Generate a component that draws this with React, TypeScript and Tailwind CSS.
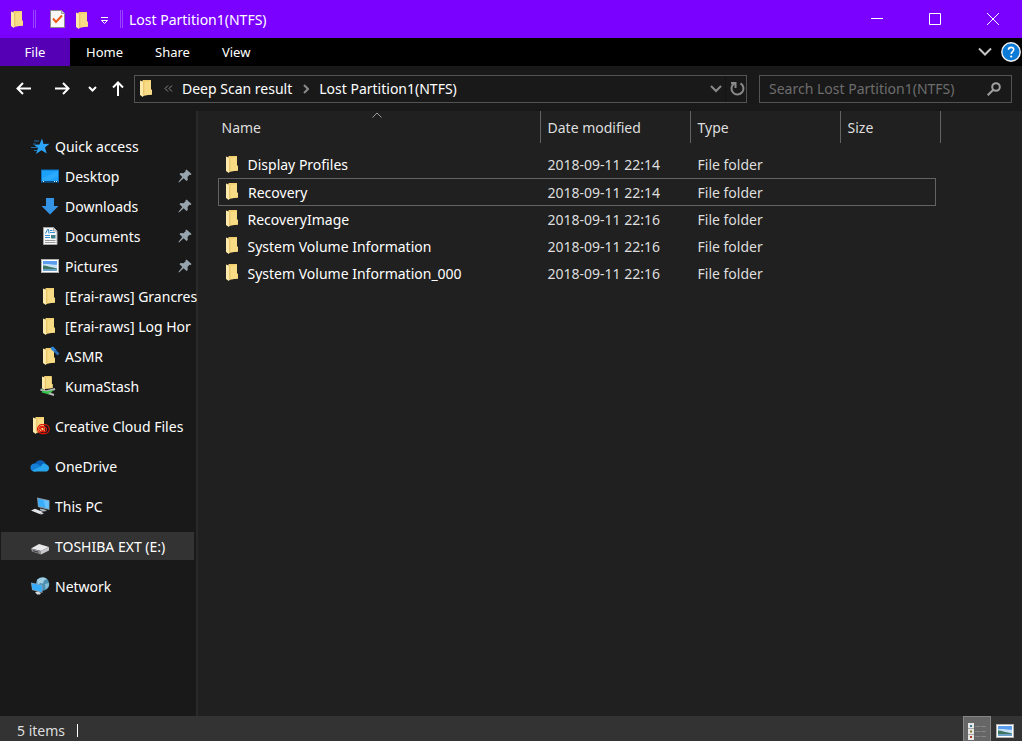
import React from "react";

type IconProps = { className?: string };

function FolderShape() {
  return (
    <>
      <path d="M2.500 0H11v9.500l1 .5v4.500L4 15.500 2.500 14z" fill="#f2cf6e" />
      <path d="M4 2.500 11 1v8.500l1 .5v4.500L4 15.500z" fill="#f8dc85" />
      <path d="M0 .5 4 2v13.200L2.800 17 0 15z" fill="#fde9a9" />
      <path d="M3.300 2 4.200 2.300V15l-.9 1z" fill="#e0b654" />
    </>
  );
}

function Folder({ className = "" }: IconProps) {
  return (
    <svg className={className} width="12" height="17" viewBox="0 0 12 17" aria-hidden="true">
      <FolderShape />
    </svg>
  );
}

function FolderLink() {
  return (
    <svg width="20" height="20" viewBox="0 0 20 20" aria-hidden="true">
      <g transform="translate(3 2)">
        <FolderShape />
      </g>
      <path d="m10.500 1.500 2.500-1 3.500 3.500-2 2-3-2z" fill="#2f86d6" />
      <path d="m14.500 4.500 4 4" stroke="#2a6fb5" strokeWidth="2.600" />
    </svg>
  );
}

function FolderShared() {
  return (
    <svg width="20" height="20" viewBox="0 0 20 20" aria-hidden="true">
      <g transform="translate(2 0) scale(.88 .82)">
        <FolderShape />
      </g>
      <path d="M.5 13.500 6 15.500 15 13" stroke="#b5b9b8" strokeWidth="2.200" fill="none" />
      <path d="M2 16.500 13.500 14l-3 3.500z" fill="#35c04a" />
      <path d="m8 17 6 2" stroke="#b5b9b8" strokeWidth="2" />
      <path d="M2 15.500 9 17.500" stroke="#35c04a" strokeWidth="2.200" />
    </svg>
  );
}

function FolderCloud() {
  return (
    <svg width="20" height="20" viewBox="0 0 20 20" aria-hidden="true">
      <g transform="translate(3 1)">
        <FolderShape />
      </g>
      <g fill="none" stroke="#e01408" strokeWidth="1.100">
        <rect x="7.500" y="8.600" width="11.800" height="9" rx="4.500" />
        <circle cx="11.500" cy="13.200" r="2.600" />
        <path d="M10 13.500c1-3.500 6.500-3.500 6.500 0 0 2-1.500 2.500-3 2.500l-2.500-2.500" />
      </g>
    </svg>
  );
}

function QuickStar() {
  return (
    <svg width="20" height="20" viewBox="0 0 20 20" aria-hidden="true">
      <path d="m12 2.500 1.500 5.500 6-.3-4.500 3.800 1.700 6-5.200-3.200-5.500 3.700 2-6-4-3.200 5.500-.3z" fill="#2ba4f5" />
      <path d="M4 5h5M3 8h3M1 11.500h6M4 14.500h3" stroke="#1d6fae" strokeWidth="1" />
    </svg>
  );
}

function Desktop() {
  return (
    <svg width="20" height="20" viewBox="0 0 20 20" aria-hidden="true">
      <rect x="1.500" y="4" width="17" height="12" fill="#1ba1fa" stroke="#0d72c4" />
      <path d="M18 4.500v6L7 15.500H2v-3z" fill="#3bb2ff" opacity=".5" />
      <path d="M2 15.500h16" stroke="#0b4d87" />
      <path d="M3 15.500h1M14 15.500h1M16 15.500h1" stroke="#fff" />
    </svg>
  );
}

function Download() {
  return (
    <svg width="20" height="20" viewBox="0 0 20 20" aria-hidden="true">
      <path d="M6 2h8v8h4.500L10 18.500 1.500 10H6z" fill="#3593e6" />
    </svg>
  );
}

function DocumentIcon() {
  return (
    <svg width="20" height="20" viewBox="0 0 20 20" aria-hidden="true">
      <path d="M3.500 1.500h10l3.500 3.500v13.500H3.500z" fill="#f7f7f7" stroke="#a6a6a6" />
      <path d="M13.500 1.500V5H17" fill="#ddd" stroke="#a6a6a6" />
      <path d="m5.500 7.500 2-4h1l.5 4" stroke="#1f7fcb" fill="none" />
      <path d="M10 4.500h2.500M10 6.500h5M5 9.500h5M5 11.500h5" stroke="#328fd6" />
      <path d="M11 9h4.500v3.500H11z" fill="#3b7f8a" />
      <path d="M5 14.500h10.500M5 16.500h10.500" stroke="#9a9a9a" />
    </svg>
  );
}

function PictureIcon() {
  return (
    <svg width="20" height="20" viewBox="0 0 20 20" aria-hidden="true">
      <rect x="1.500" y="3.500" width="17" height="13" fill="#fff" stroke="#b0b0b0" />
      <path d="M3 5h14v5H3z" fill="#5a9cee" />
      <path d="M3 8.500c4-1.500 9 1 14 0V13H3z" fill="#c5e0f7" />
      <path d="M3 9.500c4 0 8 2 14 3v1H3z" fill="#3d7560" />
      <path d="M3 13h14v2H3z" fill="#6aa0c8" />
    </svg>
  );
}

function OneDrive() {
  return (
    <svg width="20" height="20" viewBox="0 0 20 20" aria-hidden="true">
      <path d="M5 8a5.500 5.500 0 0 1 10.500 0L12 12z" fill="#0a62b8" />
      <path d="M4 15.500A4 4 0 0 1 3 7.800c2-.8 4 0 5 .8L13 12l-7 3.500z" fill="#1680d8" />
      <path d="M11 10.300c1-2.800 4-3.500 5.500-1.800A3.800 3.800 0 0 1 17 15.500H4.500c-1 0-2-.6-2.500-1z" fill="#29a5ec" />
    </svg>
  );
}

function ThisPC() {
  return (
    <svg width="20" height="20" viewBox="0 0 20 20" aria-hidden="true">
      <path d="m7 1.500 12.500 2.800V14L8 11z" fill="#8c9aa6" />
      <path d="m8 2.700 10.700 2.400v7.600L8.500 10z" fill="#39aefc" />
      <path d="m13.500 4 5.200 1.100v7.600l-3-.8z" fill="#66c2ff" />
      <path d="m10 12.500 5 1 2 1.500-4 .5-3-1.500z" fill="#aeb6bd" />
      <path d="m1 14.500 4-1.800 8 3.300-3.500 2z" fill="#e4e6ea" />
      <path d="m11.500 16.500 2.500.8-2.500 1.200-2-.6z" fill="#cdd1d8" />
    </svg>
  );
}

function Drive() {
  return (
    <svg width="20" height="20" viewBox="0 0 20 20" aria-hidden="true">
      <path d="m1 12.500 8-4.500 10 3-8 4z" fill="#e9e9eb" />
      <path d="m1 12.500 10 2.500v3.500L2 15.500z" fill="#909094" />
      <path d="M11 15 19 11v3.500l-8 4z" fill="#c9c9cd" />
      <path d="m3 14.200 5.500 1.500v1L3 15.200z" fill="#3b3b3e" />
    </svg>
  );
}

function NetworkIcon() {
  return (
    <svg width="20" height="20" viewBox="0 0 20 20" aria-hidden="true">
      <circle cx="12.500" cy="8" r="6.800" fill="#4c90b3" />
      <path d="M7 4c3-3.500 8-3 10-1l-3 1.500-1 3-3-.5-2 3z" fill="#a3cfe2" />
      <path d="m15 8 4-1c.3 3-1.500 5.500-3.500 6.500z" fill="#86bed6" />
      <path d="M1 6.500 12.500 9v8L2 14z" fill="#8fa3b0" />
      <path d="m1.500 7.200 10.300 2.300v6.500L2.500 13.400z" fill="#36adfa" />
      <path d="m5 16 3-.5 3 1.500-1 1.500H7z" fill="#d5dade" />
    </svg>
  );
}

function Pin() {
  return (
    <svg width="14" height="14" viewBox="0 0 14 14" aria-hidden="true">
      <path d="M8.500.5 13.500 5l-.8 1-1.200-.2-2 2.200.3 3-1.300 1L5.600 9.300 1 13.500l-.6-.6L4.300 8 1.500 5.300l1-1.200 3 .2 2.200-2L7.500 1.200z" fill="#98a4ad" />
    </svg>
  );
}

function Stroke({ d, w, h, width = 2, className = "" }: { d: string; w: number; h: number; width?: number; className?: string }) {
  return (
    <svg className={className} width={w} height={h} viewBox={`0 0 ${w} ${h}`} fill="none" stroke="currentColor" strokeWidth={width} aria-hidden="true">
      <path d={d} />
    </svg>
  );
}

type Item = { label: string; icon: React.ReactNode; pinned?: boolean; active?: boolean };

const quick: Item[] = [
  { label: "Desktop", icon: <Desktop />, pinned: true },
  { label: "Downloads", icon: <Download />, pinned: true },
  { label: "Documents", icon: <DocumentIcon />, pinned: true },
  { label: "Pictures", icon: <PictureIcon />, pinned: true },
  { label: "[Erai-raws] Grancres", icon: <Folder className="mx-[3px]" /> },
  { label: "[Erai-raws] Log Hor", icon: <Folder className="mx-[3px]" /> },
  { label: "ASMR", icon: <FolderLink /> },
  { label: "KumaStash", icon: <FolderShared /> },
];

const roots: Item[] = [
  { label: "Creative Cloud Files", icon: <FolderCloud /> },
  { label: "OneDrive", icon: <OneDrive /> },
  { label: "This PC", icon: <ThisPC /> },
  { label: "TOSHIBA EXT (E:)", icon: <Drive />, active: true },
  { label: "Network", icon: <NetworkIcon /> },
];

const files = [
  { name: "Display Profiles", date: "2018-09-11 22:14" },
  { name: "Recovery", date: "2018-09-11 22:14", focused: true },
  { name: "RecoveryImage", date: "2018-09-11 22:16" },
  { name: "System Volume Information", date: "2018-09-11 22:16" },
  { name: "System Volume Information_000", date: "2018-09-11 22:16" },
];

function NavLink({ item, nested = false }: { item: Item; nested?: boolean }) {
  return (
    <a
      href="#"
      aria-current={item.active ? "page" : undefined}
      className={`ml-px flex h-7 items-center whitespace-nowrap ${nested ? "pl-[39px]" : "pl-[29px]"} ${item.active ? "bg-[#333333]" : ""}`}
    >
      <span className="flex w-5 shrink-0 items-center">{item.icon}</span>
      <span className="ml-[5px] flex-1 pt-[2px]">{item.label}</span>
      {item.pinned && (
        <span className="mr-[2px]">
          <Pin />
        </span>
      )}
    </a>
  );
}

function ToolbarDivider({ className = "" }: IconProps) {
  return <span className={`h-[18px] w-[3px] border-x border-[#9a45ff] ${className}`} />;
}

export default function App() {
  return (
    <div className="flex min-h-screen flex-col bg-[#202020] font-['Noto_Sans','Open_Sans',sans-serif] text-sm text-white">
      <header className="flex h-[38px] items-center bg-[#7a00ff] pl-[11px]">
        <Folder />
        <ToolbarDivider className="ml-[10px]" />
        <button aria-label="Properties" className="ml-[14px]">
          <svg width="15" height="18" viewBox="0 0 15 18" aria-hidden="true">
            <path d="M.5.5h11L14.500 3.500v14H.5z" fill="#f8f8f8" stroke="#8b8b8b" />
            <path d="M11.500.5v3h3" fill="#d8d8d8" stroke="#9b9b9b" />
            <path d="m3 8.500 3 3.500 6-6.500" fill="none" stroke="#ef5a18" strokeWidth="2" />
          </svg>
        </button>
        <button aria-label="New folder" className="ml-[11px] pt-[2px]">
          <Folder />
        </button>
        <button aria-label="Customize toolbar" className="ml-3 pt-1">
          <svg width="9" height="8" viewBox="0 0 9 8" aria-hidden="true">
            <path d="M1 .5h7" stroke="#fff" />
            <path d="M1.500 3.500h6L4.500 6.500z" stroke="#fff" fill="none" />
          </svg>
        </button>
        <ToolbarDivider className="ml-[11px]" />
        <h1 className="ml-[6px] flex-1 whitespace-nowrap pt-[2px]">Lost Partition1(NTFS)</h1>
        <button aria-label="Minimize" className="flex h-full w-[58px] items-center justify-center">
          <Stroke d="M0 5.500h12" w={12} h={12} width={1} />
        </button>
        <button aria-label="Maximize" className="flex h-full w-[58px] items-center justify-center">
          <Stroke d="M.5.5h11v11H.5z" w={12} h={12} width={1} />
        </button>
        <button aria-label="Close" className="flex h-full w-[58px] items-center justify-center">
          <Stroke d="m0 0 12 12m0-12-12 12" w={12} h={12} width={1} />
        </button>
      </header>

      <nav className="flex h-7 items-center bg-black text-[13px]">
        <button className="h-full w-[70px] bg-[#5500b5]">File</button>
        <button className="h-full px-4">Home</button>
        <button className="h-full px-4">Share</button>
        <button className="h-full px-4">View</button>
        <button aria-label="Expand ribbon" className="ml-auto text-[#c4c4c4]">
          <Stroke d="m1 1.500 6 6 6-6" w={14} h={10} width={2} />
        </button>
        <button aria-label="Help" className="mx-px ml-[9px]">
          <svg width="20" height="20" viewBox="0 0 20 20" aria-hidden="true">
            <circle cx="10" cy="10" r="9.200" fill="#0c7bd8" stroke="#f2f2f2" strokeWidth="1.400" />
            <path d="M7.500 7.700C7.500 4.500 12.700 4.600 12.700 7.600c0 2-2.500 2-2.500 4.400" fill="none" stroke="#fff" strokeWidth="1.600" />
            <circle cx="10.200" cy="14.500" r="1.100" fill="#fff" />
          </svg>
        </button>
      </nav>

      <div className="flex h-[45px] items-center bg-[#191919] pr-[10px] pl-4">
        <button aria-label="Back"><Stroke d="M15 6.500H1.500M7 1 1.500 6.500 7 12" w={15} h={13} /></button>
        <button aria-label="Forward" className="ml-6"><Stroke d="M0 6.500h13.500M8 1l5.500 5.500L8 12" w={15} h={13} /></button>
        <button aria-label="Recent locations" className="ml-[18px]"><Stroke d="m1 1 3.500 3.500L8 1" w={9} h={6} /></button>
        <button aria-label="Up" className="ml-[15px]"><Stroke d="M6 15V1.500M1 6.500l5-5 5 5" w={12} h={15} /></button>
        <div className="ml-[10px] flex h-7 min-w-0 flex-1 items-center border border-[#535353] pl-[5px] whitespace-nowrap">
          <Folder />
          <button aria-label="Previous folders" className="ml-3 text-[#8a8a8a]">
            <Stroke d="M4 .5 1 3.500l3 3M8 .5 5 3.500l3 3" w={9} h={7} width={1} />
          </button>
          <button className="ml-[9px]">Deep Scan result</button>
          <Stroke className="ml-[11px] text-[#8a8a8a]" d="m1 1 4 4-4 4" w={6} h={10} width={2} />
          <button className="ml-[10px]">Lost Partition1(NTFS)</button>
          <button aria-label="Address history" className="ml-auto text-[#8a8a8a]"><Stroke d="m1 1 5 5 5-5" w={12} h={8} /></button>
          <button aria-label="Refresh" className="ml-[3px] flex h-full items-center border-l border-[#131313] pr-px pl-1 text-[#8a8a8a]">
            <Stroke d="M10.500 2.300a6 6 0 1 1-6.500.3M5.500 7V2H1" w={15} h={15} />
          </button>
        </div>
        <label className="ml-3 flex h-7 w-[253px] items-center border border-[#535353] pr-[10px] pl-[9px]">
          <input
            type="search"
            aria-label="Search Lost Partition1(NTFS)"
            placeholder="Search Lost Partition1(NTFS)"
            className="min-w-0 flex-1 bg-transparent outline-none placeholder:text-[#6d6d6d]"
          />
          <svg className="text-[#a0a0a0]" width="14" height="14" viewBox="0 0 14 14" fill="none" stroke="currentColor" strokeWidth="2" aria-hidden="true">
            <circle cx="9" cy="5" r="3.800" />
            <path d="M6.300 7.700.7 13.300" />
          </svg>
        </label>
      </div>

      <div className="flex flex-1">
        <aside className="w-[198px] shrink-0 border-r-2 border-[#292929] bg-[#191919] pt-[21px] pr-[2px]">
          <div className="flex flex-col gap-[2px]">
            <NavLink item={{ label: "Quick access", icon: <QuickStar /> }} />
            {quick.map((item) => (
              <NavLink key={item.label} item={item} nested />
            ))}
          </div>
          <div className="mt-3 flex flex-col gap-3">
            {roots.map((item) => (
              <NavLink key={item.label} item={item} />
            ))}
          </div>
        </aside>

        <main className="min-w-0 flex-1 pl-5">
          <table className="w-[722px] table-fixed border-collapse text-left">
            <colgroup>
              <col className="w-[322px]" />
              <col className="w-[150px]" />
              <col className="w-[150px]" />
              <col className="w-[95px]" />
              <col className="w-[5px]" />
            </colgroup>
            <thead className="text-[#dedede]">
              <tr>
                <th className="p-0 pb-2 font-normal">
                  <div className="relative flex h-8 items-center border-r border-[#636363] pt-[2px] pl-[3px]">
                    Name
                    <Stroke className="absolute top-px left-[153px] text-[#9b9b9b]" d="M.5 5.500 5 1l4.500 4.500" w={10} h={6} width={1} />
                  </div>
                </th>
                <th className="p-0 pb-2 font-normal">
                  <div className="flex h-8 items-center border-r border-[#636363] pt-[2px] pl-[7px]">Date modified</div>
                </th>
                <th className="p-0 pb-2 font-normal">
                  <div className="flex h-8 items-center border-r border-[#636363] pt-[2px] pl-[7px]">Type</div>
                </th>
                <th colSpan={2} className="p-0 pb-2 font-normal">
                  <div className="flex h-8 items-center border-r border-[#636363] pt-[2px] pl-[7px]">Size</div>
                </th>
              </tr>
            </thead>
            <tbody>
              {files.map((f) => {
                const line = f.focused ? "border-y border-[#636363]" : "";
                return (
                  <tr key={f.name} className="h-[27px]">
                    <td className={`p-0 pl-[7px] ${line} ${f.focused ? "border-l" : ""}`}>
                      <div className="flex items-center">
                        <Folder />
                        <span className="ml-[10px] pt-[2px]">{f.name}</span>
                      </div>
                    </td>
                    <td className={`p-0 pt-[2px] pl-[7px] text-[#dedede] ${line}`}>{f.date}</td>
                    <td className={`p-0 pt-[2px] pl-[7px] text-[#dedede] ${line}`}>File folder</td>
                    <td className={`p-0 ${line} ${f.focused ? "border-r" : ""}`} />
                  </tr>
                );
              })}
            </tbody>
          </table>
        </main>
      </div>

      <footer className="flex h-[25px] items-center bg-[#333333] pl-[17px]">
        <span className="mt-1 text-[#dedede]">5 items</span>
        <span className="mt-1 ml-3 h-[13px] w-px bg-white" />
        <button aria-label="Details view" className="ml-auto flex h-full w-7 items-center justify-center border border-b-0 border-[#868686] bg-[#666666] pt-1">
          <svg width="20" height="17" viewBox="0 0 20 17" aria-hidden="true">
            <path d="M1 0h6v17H1z" fill="#e6e6e6" />
            <path d="M1 5.500h6M1 11.500h6" stroke="#a8a8a8" />
            <path d="M3 2h2v2H3z" fill="#397f91" />
            <path d="M3 7.500h2v2H3z" fill="#847223" />
            <path d="M3 13h2v2H3z" fill="#b04024" />
            <path d="M8 3.500h5M14 3.500h5M8 8.500h5M14 8.500h5M8 13.500h5M14 13.500h5" stroke="#858585" />
          </svg>
        </button>
        <button aria-label="Large icons view" className="mr-[7px] ml-1 pt-1">
          <PictureIcon />
        </button>
      </footer>
    </div>
  );
}
